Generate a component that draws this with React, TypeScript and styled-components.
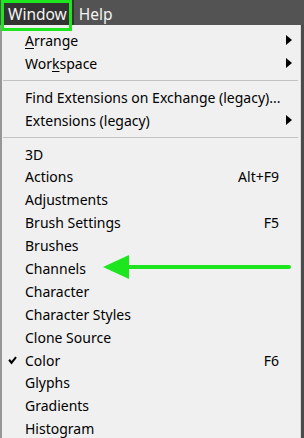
import React from 'react';
import styled, {createGlobalStyle} from 'styled-components';

const GlobalStyle = createGlobalStyle`
  html, body {
    margin: 0;
    padding: 0;
    background: #4b4b4b;
  }
  body {
    font-family: 'Noto Sans', 'Open Sans', sans-serif;
  }
`;

type Item =
  | {kind: 'sep'}
  | {
      kind: 'item';
      label: React.ReactNode;
      shortcut?: string;
      submenu?: boolean;
      checked?: boolean;
    };

const items: Item[] = [
  {kind: 'item', label: <><u>A</u>rrange</>, submenu: true},
  {kind: 'item', label: <>Wor<u>k</u>space</>, submenu: true},
  {kind: 'sep'},
  {kind: 'item', label: 'Find Extensions on Exchange (legacy)...'},
  {kind: 'item', label: 'Extensions (legacy)', submenu: true},
  {kind: 'sep'},
  {kind: 'item', label: '3D'},
  {kind: 'item', label: 'Actions', shortcut: 'Alt+F9'},
  {kind: 'item', label: 'Adjustments'},
  {kind: 'item', label: 'Brush Settings', shortcut: 'F5'},
  {kind: 'item', label: 'Brushes'},
  {kind: 'item', label: 'Channels'},
  {kind: 'item', label: 'Character'},
  {kind: 'item', label: 'Character Styles'},
  {kind: 'item', label: 'Clone Source'},
  {kind: 'item', label: 'Color', shortcut: 'F6', checked: true},
  {kind: 'item', label: 'Glyphs'},
  {kind: 'item', label: 'Gradients'},
  {kind: 'item', label: 'Histogram'},
];

const Check = () => (
  <svg width="9" height="9" viewBox="0 0 9 9">
    <path d="M0.3 4.6 L1.9 3.1 L3.5 5.0 L7.3 0.4 L8.8 1.8 L3.5 8.4 Z" fill="#000" />
  </svg>
);

const SubArrow = () => (
  <svg width="6" height="10" viewBox="0 0 6 10">
    <polygon points="0,0 6,5 0,10" fill="#000" />
  </svg>
);

const GreenArrow = () => (
  <svg width="190" height="26" viewBox="0 0 190 26">
    <line x1="24" y1="13" x2="186" y2="13" stroke="#1ee61e" strokeWidth="4" strokeLinecap="round" />
    <polygon points="0,13 26,1 26,25" fill="#1ee61e" />
  </svg>
);

export default function App() {
  return (
    <Page>
      <GlobalStyle />
      <MenuBar>
        <BarItem $active>Window</BarItem>
        <BarItem>Help</BarItem>
      </MenuBar>
      <Menu>
        {items.map((it, i) =>
          it.kind === 'sep' ? (
            <Separator key={i} />
          ) : (
            <Row key={i}>
              <CheckCell>{it.checked && <Check />}</CheckCell>
              <Label>{it.label}</Label>
              <Shortcut>{it.shortcut}</Shortcut>
              <ArrowCell>{it.submenu && <SubArrow />}</ArrowCell>
            </Row>
          ),
        )}
      </Menu>
      <Highlight />
      <Pointer>
        <GreenArrow />
      </Pointer>
    </Page>
  );
}

const Page = styled.div`
  position: relative;
  width: 304px;
  height: 438px;
  overflow: hidden;
  display: flex;
  flex-direction: column;
  background: #4b4b4b;
`;

const MenuBar = styled.div`
  height: 25px;
  flex-shrink: 0;
  display: flex;
  align-items: stretch;
  padding-left: 3px;
  background: #535353;
`;

const BarItem = styled.div<{$active?: boolean}>`
  display: flex;
  align-items: center;
  padding: 3px 7px 0 5px;
  font-size: 15.5px;
  color: #f4f4f4;
  background: ${(p) => (p.$active ? '#333333' : 'transparent')};
`;

const Menu = styled.div`
  width: 298px;
  flex: 1;
  padding-top: 4px;
  background: #f0f0f0;
  border-left: 2px solid #979797;
  border-right: 1px solid #d8d8d8;
`;

const Row = styled.div`
  height: 22.9px;
  display: grid;
  grid-template-columns: 23px 1fr auto 21px;
  align-items: center;
  font-size: 14px;
  color: #000;
`;

const CheckCell = styled.div`
  display: flex;
  padding-left: 6px;
`;

const Label = styled.div`
  white-space: nowrap;
  & u {
    text-underline-offset: 2px;
  }
`;

const Shortcut = styled.div`
  white-space: nowrap;
`;

const ArrowCell = styled.div`
  display: flex;
  padding-left: 7px;
`;

const Separator = styled.div`
  height: 11px;
  display: flex;
  align-items: center;
  padding: 0 2px 0 1px;
  &::after {
    content: '';
    flex: 1;
    height: 1px;
    background: #c2c2c2;
  }
`;

const Highlight = styled.div`
  position: absolute;
  left: 1px;
  top: 0;
  box-sizing: border-box;
  width: 71px;
  height: 31px;
  border: 3px solid #1ee61e;
`;

const Pointer = styled.div`
  position: absolute;
  left: 103px;
  top: 254px;
  display: flex;
`;
